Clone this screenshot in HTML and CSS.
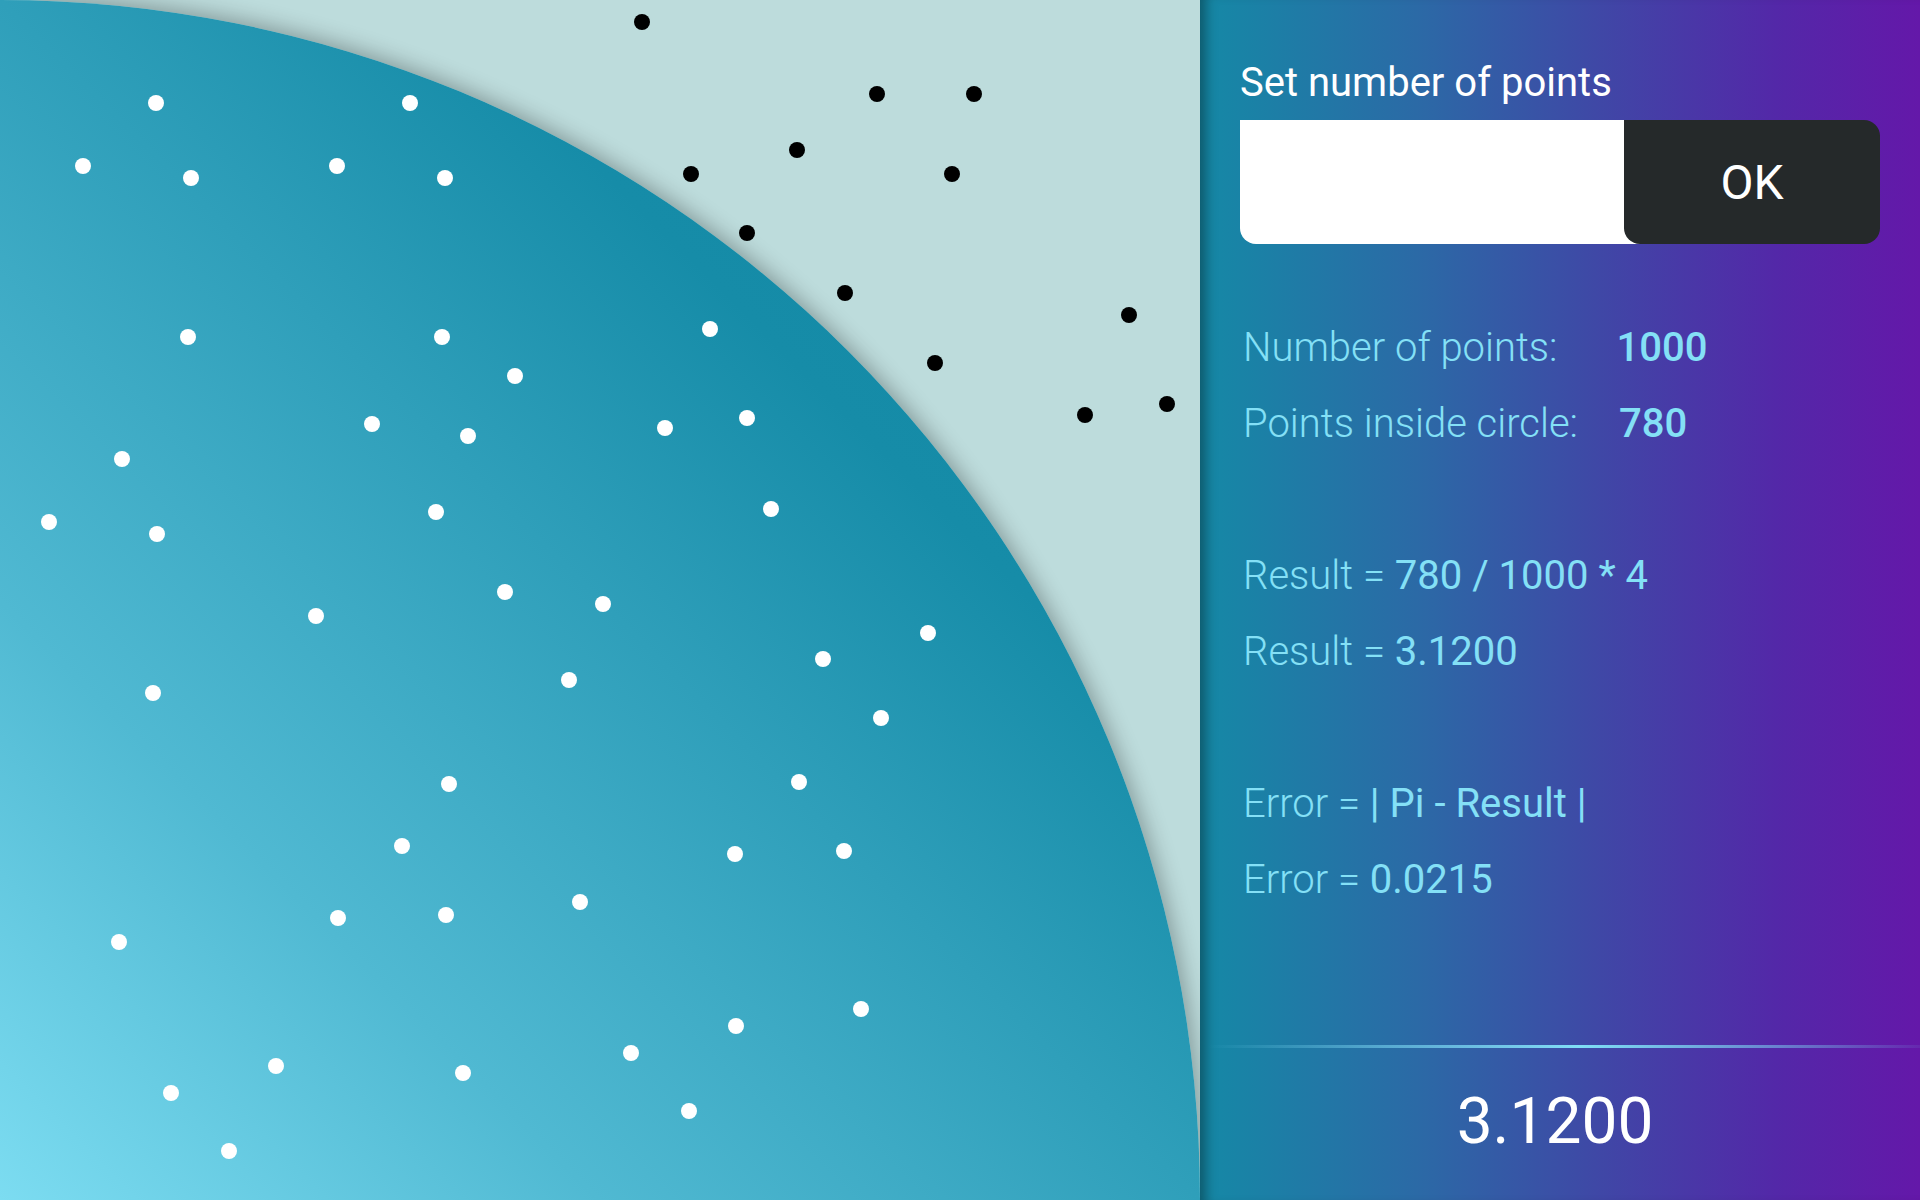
FILE: index.html
```html
<!DOCTYPE html>
<html lang="en">
<head>
<meta charset="utf-8">
<title>Monte Carlo Pi</title>
<link rel="stylesheet" href="styles.css">
</head>
<body>
<div class="app">
  <div class="board">
    <div class="quadrant"></div>
    <div class="dots">
      <span class="dot out" style="left:642px;top:22px"></span>
      <span class="dot out" style="left:877px;top:94px"></span>
      <span class="dot out" style="left:974px;top:94px"></span>
      <span class="dot out" style="left:797px;top:150px"></span>
      <span class="dot out" style="left:691px;top:174px"></span>
      <span class="dot out" style="left:952px;top:174px"></span>
      <span class="dot out" style="left:747px;top:233px"></span>
      <span class="dot out" style="left:845px;top:293px"></span>
      <span class="dot out" style="left:1129px;top:315px"></span>
      <span class="dot out" style="left:935px;top:363px"></span>
      <span class="dot out" style="left:1085px;top:415px"></span>
      <span class="dot out" style="left:1167px;top:404px"></span>

      <span class="dot in" style="left:156px;top:103px"></span>
      <span class="dot in" style="left:410px;top:103px"></span>
      <span class="dot in" style="left:83px;top:166px"></span>
      <span class="dot in" style="left:191px;top:178px"></span>
      <span class="dot in" style="left:337px;top:166px"></span>
      <span class="dot in" style="left:445px;top:178px"></span>
      <span class="dot in" style="left:188px;top:337px"></span>
      <span class="dot in" style="left:442px;top:337px"></span>
      <span class="dot in" style="left:515px;top:376px"></span>
      <span class="dot in" style="left:710px;top:329px"></span>
      <span class="dot in" style="left:372px;top:424px"></span>
      <span class="dot in" style="left:468px;top:436px"></span>
      <span class="dot in" style="left:665px;top:428px"></span>
      <span class="dot in" style="left:747px;top:418px"></span>
      <span class="dot in" style="left:122px;top:459px"></span>
      <span class="dot in" style="left:49px;top:522px"></span>
      <span class="dot in" style="left:157px;top:534px"></span>
      <span class="dot in" style="left:436px;top:512px"></span>
      <span class="dot in" style="left:771px;top:509px"></span>
      <span class="dot in" style="left:316px;top:616px"></span>
      <span class="dot in" style="left:505px;top:592px"></span>
      <span class="dot in" style="left:603px;top:604px"></span>
      <span class="dot in" style="left:153px;top:693px"></span>
      <span class="dot in" style="left:569px;top:680px"></span>
      <span class="dot in" style="left:823px;top:659px"></span>
      <span class="dot in" style="left:928px;top:633px"></span>
      <span class="dot in" style="left:881px;top:718px"></span>
      <span class="dot in" style="left:449px;top:784px"></span>
      <span class="dot in" style="left:799px;top:782px"></span>
      <span class="dot in" style="left:402px;top:846px"></span>
      <span class="dot in" style="left:735px;top:854px"></span>
      <span class="dot in" style="left:844px;top:851px"></span>
      <span class="dot in" style="left:119px;top:942px"></span>
      <span class="dot in" style="left:338px;top:918px"></span>
      <span class="dot in" style="left:446px;top:915px"></span>
      <span class="dot in" style="left:580px;top:902px"></span>
      <span class="dot in" style="left:861px;top:1009px"></span>
      <span class="dot in" style="left:736px;top:1026px"></span>
      <span class="dot in" style="left:631px;top:1053px"></span>
      <span class="dot in" style="left:171px;top:1093px"></span>
      <span class="dot in" style="left:276px;top:1066px"></span>
      <span class="dot in" style="left:463px;top:1073px"></span>
      <span class="dot in" style="left:229px;top:1151px"></span>
      <span class="dot in" style="left:689px;top:1111px"></span>
    </div>
  </div>

  <aside class="panel">
    <section class="controls">
      <label class="title" for="count">Set number of points</label>
      <div class="field">
        <input id="count" class="input" type="text" value="">
        <button class="ok" type="button">OK</button>
      </div>
    </section>

    <section class="stats">
      <div class="row">Number of points:<span class="num total">1000</span></div>
      <div class="row">Points inside circle:<span class="num inside">780</span></div>
      <div class="row blank"></div>
      <div class="row">Result = <span class="val">780 / 1000 * 4</span></div>
      <div class="row">Result = <span class="val">3.1200</span></div>
      <div class="row blank"></div>
      <div class="row">Error = <span class="val">| Pi - Result |</span></div>
      <div class="row">Error = <span class="val">0.0215</span></div>
    </section>

    <footer class="footer">
      <div class="divider"></div>
      <div class="big">3.1200</div>
    </footer>
  </aside>
</div>
</body>
</html>
```
FILE: styles.css
```css
* { box-sizing: border-box; }

html, body {
  margin: 0;
  padding: 0;
}

body {
  font-family: Roboto, "Liberation Sans", sans-serif;
  width: 1920px;
  height: 1200px;
  overflow: hidden;
}

.app {
  display: flex;
  width: 1920px;
  height: 1200px;
}

/* ---------- board ---------- */
.board {
  position: relative;
  flex: 0 0 1200px;
  width: 1200px;
  height: 1200px;
  background: #bddcdc;
  overflow: hidden;
}

.quadrant {
  width: 1200px;
  height: 1200px;
  border-top-right-radius: 1200px;
  background: linear-gradient(to top right, #7cdcf1 0%, #50b9d2 25%, #2f9fba 50%, #168ca8 68%, #0f86a2 100%);
  box-shadow: 0 0 22px 3px rgba(0, 0, 0, 0.32);
}

.dots {
  position: absolute;
  inset: 0;
}

.dot {
  position: absolute;
  width: 16px;
  height: 16px;
  margin: -8px 0 0 -8px;
  border-radius: 50%;
}

.dot.in { background: #ffffff; }
.dot.out { background: #000000; }

/* ---------- panel ---------- */
.panel {
  flex: 1 1 auto;
  display: flex;
  flex-direction: column;
  height: 1200px;
  background: linear-gradient(to right, #1589a6 0%, #2b6aa6 30%, #3f48a6 55%, #5328a8 80%, #6418a9 100%);
  box-shadow: inset 14px 0 12px -8px rgba(0, 0, 0, 0.35);
  color: #84e0f6;
}

.controls {
  padding: 60px 40px 0 40px;
}

.title {
  display: block;
  font-size: 40px;
  line-height: 46px;
  font-weight: 400;
  color: #ffffff;
}

.field {
  display: flex;
  margin-top: 14px;
  height: 124px;
}

.input {
  flex: 0 0 400px;
  width: 400px;
  height: 124px;
  margin: 0 -16px 0 0;
  padding: 0 24px;
  border: none;
  outline: none;
  background: #ffffff;
  border-radius: 0 0 0 16px;
  font-family: Roboto, sans-serif;
  font-size: 40px;
}

.ok {
  position: relative;
  flex: 1 1 auto;
  height: 124px;
  border: none;
  background: #25292a;
  color: #ffffff;
  border-radius: 0 16px 16px 16px;
  font-family: Roboto, sans-serif;
  font-size: 48px;
  font-weight: 400;
  padding: 0;
}

.stats {
  padding: 66px 40px 0 43px;
}

.row {
  font-size: 40px;
  line-height: 76px;
  height: 76px;
  font-weight: 300;
  white-space: nowrap;
}

.num {
  font-weight: 500;
}

.num.total { margin-left: 59px; }
.num.inside { margin-left: 41px; }

.val {
  font-weight: 400;
}

.footer {
  margin-top: auto;
  padding-bottom: 38px;
}

.divider {
  height: 3px;
  margin-left: 8px;
  background: linear-gradient(to right, rgba(127, 220, 245, 0) 0%, rgba(127, 220, 245, 0.55) 25%, #80def6 52%, rgba(127, 220, 245, 0.5) 80%, rgba(127, 220, 245, 0.08) 100%);
}

.big {
  margin-top: 34px;
  padding-right: 10px;
  text-align: center;
  font-size: 64px;
  line-height: 80px;
  font-weight: 400;
  color: #ffffff;
}
```
